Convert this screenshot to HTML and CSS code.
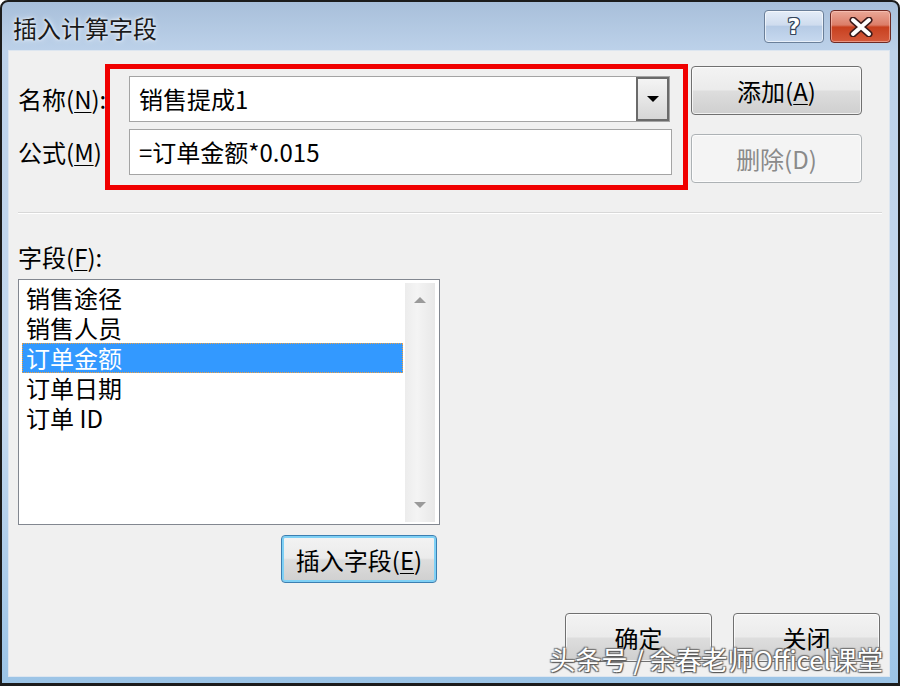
FILE: index.html
```html
<!DOCTYPE html>
<html>
<head>
    <title>插入计算字段</title>
    <meta charset="utf-8">
    <link rel="stylesheet" href="styles.css">
</head>
<body>
    <div class="window">
        <!-- Title bar -->
        <div class="titlebar">
            <span class="title">插入计算字段</span>
            <div class="caption-buttons">
                <button class="cap-btn help">?</button>
                <button class="cap-btn close">
                    <svg width="28" height="20" viewBox="0 0 28 20">
                        <path d="M6 3 L22 17 M22 3 L6 17" stroke="#3b1a1a" stroke-width="7" stroke-linecap="round"/>
                        <path d="M6 3 L22 17 M22 3 L6 17" stroke="#ffffff" stroke-width="4" stroke-linecap="round"/>
                    </svg>
                </button>
            </div>
        </div>

        <!-- Dialog body -->
        <div class="client">
            <div class="top-row">
                <div class="labels">
                    <div class="label">名称(<u>N</u>):</div>
                    <div class="label">公式(<u>M</u>)</div>
                </div>
                <div class="highlight">
                    <div class="combo">
                        <span class="combo-text">销售提成1</span>
                        <span class="combo-arrow"></span>
                    </div>
                    <div class="textbox">=订单金额*0.015</div>
                </div>
                <div class="side-buttons">
                    <button class="btn">添加(<u>A</u>)</button>
                    <button class="btn" disabled>删除(D)</button>
                </div>
            </div>

            <div class="separator"></div>

            <div class="label fields-label">字段(<u>F</u>):</div>
            <div class="listbox">
                <div class="items">
                    <div class="item">销售途径</div>
                    <div class="item">销售人员</div>
                    <div class="item selected">订单金额</div>
                    <div class="item">订单日期</div>
                    <div class="item">订单 ID</div>
                </div>
                <div class="scrollbar">
                    <span class="arrow-up"></span>
                    <span class="arrow-down"></span>
                </div>
            </div>

            <button class="btn btn-insert">插入字段(<u>E</u>)</button>

            <div class="footer">
                <button class="btn btn-footer">确定</button>
                <button class="btn btn-footer">关闭</button>
            </div>

            <div class="watermark">头条号 / 余春老师Officel课堂</div>
        </div>
    </div>
</body>
</html>
```

FILE: styles.css
```css
body {
    margin: 0;
    background-color: #ffffff;
    font-family: "Noto Sans CJK SC", "Noto Sans", sans-serif;
    font-size: 24px;
    color: #000000;
}

.window {
    width: 900px;
    height: 686px;
    box-sizing: border-box;
    border: 2px solid #1c1c1c;
    border-bottom-width: 3px;
    border-radius: 8px 8px 0 0;
    padding: 0 8px 6px 6px;
    background: linear-gradient(to bottom, #a8bfda 0px, #bdd2ea 50px, #c4d8ee 60%, #9cc4e6 100%);
    display: flex;
    flex-direction: column;
}

.titlebar {
    height: 48px;
    display: flex;
    align-items: flex-start;
    justify-content: space-between;
}

.title {
    margin-left: 5px;
    margin-top: 9px;
    line-height: 34px;
    font-size: 24px;
    color: #1a1a1a;
    text-shadow: 0 0 6px #e8f0fa, 0 0 3px #ffffff;
}

.caption-buttons {
    display: flex;
    gap: 6px;
    margin-top: 8px;
    margin-right: -1px;
}

.cap-btn {
    height: 33px;
    padding: 0;
    border-radius: 4px;
    display: flex;
    align-items: center;
    justify-content: center;
    cursor: pointer;
}

.help {
    width: 60px;
    border: 1px solid #6a7f99;
    background: linear-gradient(to bottom, #e4edf8 0%, #cfdcee 45%, #b6cbe5 50%, #c7d9ef 100%);
    box-shadow: inset 0 0 0 1px rgba(255, 255, 255, 0.6);
    font-family: "DejaVu Sans", sans-serif;
    font-weight: bold;
    font-size: 22px;
    color: #ffffff;
    text-shadow: 1px 0 0 #34465c, -1px 0 0 #34465c, 0 1px 0 #34465c, 0 -1px 0 #34465c,
                 1px 1px 0 #34465c, -1px -1px 0 #34465c, 1px -1px 0 #34465c, -1px 1px 0 #34465c;
}

.close {
    width: 61px;
    border: 1px solid #6e2a24;
    background: linear-gradient(to bottom, #eaa898 0%, #dc7d68 45%, #c8401f 52%, #d45a3c 100%);
    box-shadow: inset 0 0 0 1px rgba(255, 210, 200, 0.5);
}

.client {
    flex: 1;
    position: relative;
    background-color: #f0f0f0;
    border: 1px solid #dde6f0;
    padding: 13px 7px 0 9px;
}

.top-row {
    display: flex;
    align-items: flex-start;
}

.labels {
    width: 87px;
    padding-top: 12px;
    display: flex;
    flex-direction: column;
    gap: 7px;
}

.label {
    height: 46px;
    line-height: 46px;
    white-space: nowrap;
}

u {
    text-underline-offset: 3px;
    text-decoration-thickness: 1px;
}

.highlight {
    width: 583px;
    box-sizing: border-box;
    border: 5px solid #f00000;
    padding: 7px 11px 10px 19px;
}

.combo {
    height: 46px;
    box-sizing: border-box;
    margin-right: 2px;
    border: 1px solid #a4a4a4;
    background-color: #ffffff;
    display: flex;
    align-items: stretch;
}

.combo-text {
    flex: 1;
    padding-left: 9px;
    line-height: 44px;
}

.combo-arrow {
    width: 33px;
    box-sizing: border-box;
    border: 2px solid #6a6a6a;
    background: linear-gradient(to bottom, #f4f4f4 0%, #e6e6e6 50%, #d6d6d6 100%);
    position: relative;
}

.combo-arrow::after {
    content: "";
    position: absolute;
    left: 9px;
    top: 17px;
    border-left: 6px solid transparent;
    border-right: 6px solid transparent;
    border-top: 6px solid #000000;
}

.textbox {
    height: 46px;
    box-sizing: border-box;
    margin-top: 7px;
    border: 1px solid #a4a4a4;
    background-color: #ffffff;
    padding-left: 9px;
    line-height: 44px;
}

.side-buttons {
    width: 171px;
    margin-left: 3px;
    margin-top: 2px;
    display: flex;
    flex-direction: column;
    gap: 19px;
}

.btn {
    height: 49px;
    box-sizing: border-box;
    border: 1px solid #707070;
    border-radius: 4px;
    background: linear-gradient(to bottom, #f3f3f3 0%, #ebebeb 48%, #dddddd 52%, #cfcfcf 100%);
    box-shadow: inset 0 0 0 1px rgba(255, 255, 255, 0.7);
    font-family: "Noto Sans CJK SC", "Noto Sans", sans-serif;
    font-size: 24px;
    color: #000000;
    padding: 0;
    cursor: pointer;
}

.btn:disabled {
    border-color: #adb2b5;
    background: #f4f4f4;
    color: #8a8a8a;
    cursor: default;
}

.separator {
    margin-top: 22px;
    height: 0;
    border-top: 1px solid #d8d8d8;
    border-bottom: 1px solid #ffffff;
}

.fields-label {
    margin-top: 26px;
    height: 34px;
    line-height: 34px;
}

.listbox {
    margin-top: 5px;
    width: 422px;
    height: 246px;
    box-sizing: border-box;
    border: 1px solid #828790;
    background-color: #ffffff;
    padding: 3px 4px 2px 3px;
    display: flex;
}

.items {
    width: 381px;
}

.item {
    height: 30px;
    line-height: 30px;
    padding-left: 4px;
    white-space: nowrap;
}

.selected {
    background-color: #3399ff;
    color: #ffffff;
    outline: 1px dotted #f0a040;
    outline-offset: -1px;
}

.scrollbar {
    width: 30px;
    margin-left: 2px;
    height: 239px;
    background: linear-gradient(to right, #ececec 0%, #f4f4f4 40%, #e8e8e8 100%);
    position: relative;
}

.arrow-up, .arrow-down {
    position: absolute;
    left: 9px;
    border-left: 6px solid transparent;
    border-right: 6px solid transparent;
}

.arrow-up {
    top: 14px;
    border-bottom: 6px solid #9a9a9a;
}

.arrow-down {
    bottom: 14px;
    border-top: 6px solid #9a9a9a;
}

.btn-insert {
    display: block;
    margin-top: 10px;
    margin-left: 263px;
    width: 156px;
    height: 48px;
    border: 1px solid #3c7fb1;
    box-shadow: inset 0 0 0 2px #7fd0f5;
}

.footer {
    margin-top: 30px;
    padding-right: 2px;
    display: flex;
    justify-content: flex-end;
    gap: 21px;
}

.btn-footer {
    width: 147px;
}

.watermark {
    position: absolute;
    right: 6px;
    bottom: 0;
    font-size: 26px;
    line-height: 34px;
    color: #ffffff;
    white-space: nowrap;
    text-shadow: 1px 1px 1px #555555, -1px -1px 1px #777777, 1px -1px 1px #777777, -1px 1px 1px #777777;
}
```
